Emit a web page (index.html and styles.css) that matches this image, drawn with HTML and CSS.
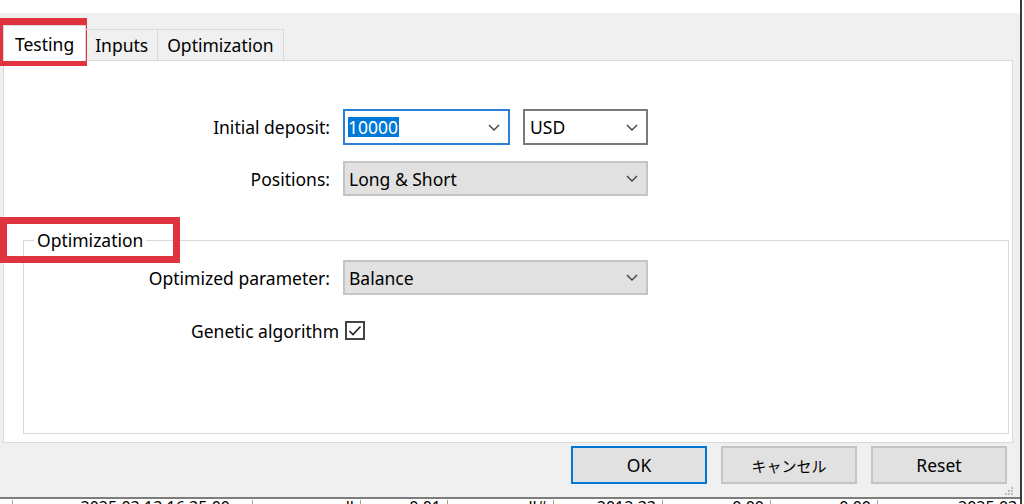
FILE: index.html
```html
<!DOCTYPE html>
<html lang="en">

<head>
    <meta charset="UTF-8">
    <title>Tester settings</title>
    <link rel="stylesheet" href="styles.css">
</head>

<body>
    <div class="screen">
        <div class="dialog">
            <div class="tabs">
                <div class="tab active">Testing</div>
                <div class="tab">Inputs</div>
                <div class="tab">Optimization</div>
            </div>

            <div class="panel">
                <div class="form">
                    <div class="lbl">Initial deposit:</div>
                    <div class="pair">
                        <div class="combo edit">
                            <span class="sel">10000</span>
                            <svg class="chev" width="12" height="7" viewBox="0 0 12 7"><polyline points="1,1 6,6 11,1" /></svg>
                        </div>
                        <div class="combo light">
                            <span>USD</span>
                            <svg class="chev" width="12" height="7" viewBox="0 0 12 7"><polyline points="1,1 6,6 11,1" /></svg>
                        </div>
                    </div>

                    <div class="lbl">Positions:</div>
                    <div class="combo">
                        <span>Long &amp; Short</span>
                        <svg class="chev" width="12" height="7" viewBox="0 0 12 7"><polyline points="1,1 6,6 11,1" /></svg>
                    </div>
                </div>

                <fieldset class="group">
                    <legend>Optimization</legend>
                    <div class="form form-group">
                        <div class="lbl">Optimized parameter:</div>
                        <div class="combo">
                            <span>Balance</span>
                            <svg class="chev" width="12" height="7" viewBox="0 0 12 7"><polyline points="1,1 6,6 11,1" /></svg>
                        </div>
                    </div>
                    <div class="check-row">
                        <span>Genetic algorithm</span>
                        <span class="check">
                            <svg width="14" height="12" viewBox="0 0 14 12"><polyline points="1.5,6 5,9.5 12.5,1.5" /></svg>
                        </span>
                    </div>
                </fieldset>
            </div>

            <div class="buttons">
                <div class="btn default">OK</div>
                <div class="btn jp">キャンセル</div>
                <div class="btn">Reset</div>
            </div>

            <!-- 右下角的拖拽点 -->
            <svg class="grip" width="10" height="10" viewBox="0 0 10 10">
                <rect x="7" y="1" width="2" height="2" />
                <rect x="4" y="4" width="2" height="2" />
                <rect x="7" y="4" width="2" height="2" />
                <rect x="1" y="7" width="2" height="2" />
                <rect x="4" y="7" width="2" height="2" />
                <rect x="7" y="7" width="2" height="2" />
            </svg>
        </div>

        <div class="rows">
            <div class="cell"></div>
            <div class="cell first">2025.03.13 16:35:00</div>
            <div class="cell">sell</div>
            <div class="cell">0.01</div>
            <div class="cell">all#</div>
            <div class="cell">2012.33</div>
            <div class="cell">0.00</div>
            <div class="cell">0.00</div>
            <div class="cell last">2025.03.13 16:40:00</div>
        </div>

        <!-- 红色标注框 -->
        <div class="mark mark-tab"></div>
        <div class="mark mark-group"></div>
    </div>
</body>

</html>
```

FILE: styles.css
```css
* {
    margin: 0;
    padding: 0;
    box-sizing: border-box;
}

body {
    width: 1024px;
    height: 504px;
    overflow: hidden;
    background: #fff;
    font-family: "Noto Sans", "Noto Sans CJK JP", sans-serif;
    font-size: 17.5px;
    color: #000;
}

.screen {
    position: relative;
    width: 1022px;
    height: 504px;
    padding-top: 13px;
    border-right: 2px solid #3a3a3a;
}

.dialog {
    position: relative;
    height: 486px;
    background: #f0f0f0;
    border-bottom: 2px solid #7d7d7d;
    display: flex;
    flex-direction: column;
}

/* tabs */
.tabs {
    position: relative;
    z-index: 1;
    display: flex;
    align-items: flex-end;
    height: 48px;
    padding-left: 3px;
    margin-bottom: -1px;
}

.tab {
    height: 31px;
    margin-bottom: 1px;
    padding: 0 9px;
    display: flex;
    align-items: center;
    border: 1px solid #d9d9d9;
    border-left: 0;
    border-bottom: 0;
}

.tab.active {
    height: 36px;
    margin-bottom: 0;
    padding: 0 11px;
    background: #fff;
    border-left: 1px solid #d9d9d9;
}

.panel {
    height: 383px;
    margin: 0 7px 0 3px;
    background: #fff;
    border: 1px solid #d9d9d9;
    display: flex;
    flex-direction: column;
}

/* form rows */
.form {
    display: grid;
    grid-template-columns: 326px 305px;
    column-gap: 13px;
    row-gap: 16px;
    align-items: center;
    padding-top: 48px;
}

.lbl {
    text-align: right;
}

.pair {
    display: flex;
    gap: 13px;
}

.combo {
    height: 35px;
    display: flex;
    align-items: center;
    justify-content: space-between;
    padding: 0 8px 0 4px;
    background: #e1e1e1;
    border: 2px solid #c4c4c4;
}

.combo.edit {
    width: 167px;
    height: 36px;
    padding-left: 3px;
    background: #fff;
    border-color: #2b80d6;
}

.combo.light {
    width: 125px;
    height: 36px;
    padding-left: 5px;
    background: #fff;
    border-color: #7a7a7a;
}

.sel {
    background: #0078d7;
    color: #fff;
    line-height: 20px;
    padding-right: 1px;
}

.chev {
    fill: none;
    stroke: #404040;
    stroke-width: 1.4;
}

/* group box */
.group {
    flex: 1;
    min-width: 0;
    margin: 33px 3px 8px 19px;
    border: 1px solid #d9d9d9;
}

.group legend {
    margin-left: 10px;
    padding: 0 3px;
    line-height: 22px;
}

.form-group {
    grid-template-columns: 306px 305px;
    padding-top: 9px;
}

.check-row {
    display: flex;
    align-items: center;
    gap: 6px;
    height: 19px;
    margin: 26px 0 0 167px;
}

.check {
    width: 20px;
    height: 19px;
    border: 2px solid #444;
    display: flex;
    align-items: center;
    justify-content: center;
}

.check svg {
    fill: none;
    stroke: #222;
    stroke-width: 1.6;
}

/* buttons */
.buttons {
    display: flex;
    justify-content: flex-end;
    gap: 14px;
    padding: 3px 13px 0 0;
}

.btn {
    width: 136px;
    height: 38px;
    display: flex;
    align-items: center;
    justify-content: center;
    background: #e1e1e1;
    border: 2px solid #c4c4c4;
}

.btn.default {
    border-color: #0078d7;
}

.btn.jp {
    font-size: 15px;
}

.grip {
    position: absolute;
    right: 6px;
    bottom: 1px;
    fill: #bdbdbd;
}

/* table row under the dialog */
.rows {
    display: grid;
    grid-template-columns: 12px 240px 108px 87px 106px 109px 108px 107px 1fr;
    height: 5px;
    overflow: hidden;
    font-size: 16px;
    line-height: 14px;
    padding-top: 1px;
}

.cell {
    padding-right: 6px;
    text-align: right;
    white-space: nowrap;
    overflow: hidden;
    border-left: 1px solid #a0a0a0;
}

.cell:first-child {
    border-left: 0;
}

.cell.first {
    padding-right: 22px;
}

.cell.last {
    text-align: left;
    padding-left: 80px;
}

/* annotation boxes */
.mark {
    position: absolute;
    left: 0;
    border: 7px solid #e03340;
}

.mark-tab {
    top: 18px;
    width: 87px;
    height: 48px;
}

.mark-group {
    top: 217px;
    width: 180px;
    height: 46px;
}
```
